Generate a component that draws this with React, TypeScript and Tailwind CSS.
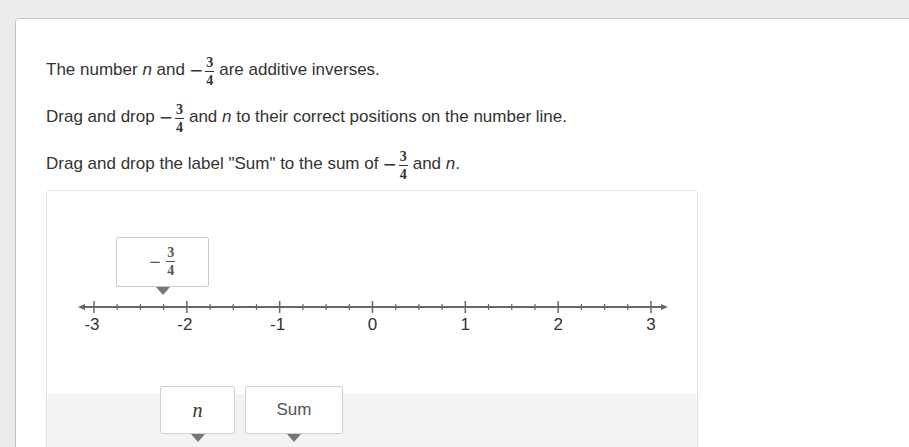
import React from "react";

const Frac = ({ num, den }: { num: string; den: string }) => (
    <span className="inline-flex flex-col items-center align-middle font-['Liberation_Serif',serif] font-bold text-[14px] leading-[12px] mx-[1px]">
        <span className="border-b border-current px-[1px] pb-[2px]">{num}</span>
        <span className="pt-[3px]">{den}</span>
    </span>
);

const NegFrac = () => (
    <span className="inline-flex items-center mx-[4px] mt-[4px]">
        <span className="font-['DejaVu_Sans',sans-serif] text-[17px] mr-[1px] -mt-[3px]">−</span>
        <Frac num="3" den="4" />
    </span>
);

const Pointer = () => (
    <span className="absolute left-1/2 -translate-x-1/2 top-full mt-[1px] w-0 h-0 border-l-[7px] border-r-[7px] border-t-[8px] border-l-transparent border-r-transparent border-t-[#777]" />
);

const UNIT = 92.83;
const X0 = 47;

const NumberLine = () => {
    const y = 116;
    const ticks: React.ReactNode[] = [];
    for (let i = 0; i <= 24; i++) {
        const x = X0 + (UNIT / 4) * i;
        const major = i % 4 === 0;
        ticks.push(
            <line key={i} x1={x} x2={x} y1={y - (major ? 6 : 3)} y2={y + (major ? 6 : 3)} stroke="#666" strokeWidth={major ? 1.5 : 1.2} />
        );
    }
    return (
        <svg width={652} height={150} className="block">
            <line x1={34} x2={618} y1={y} y2={y} stroke="#666" strokeWidth={2} />
            <polygon points={`${31},${y} ${38},${y - 3} ${38},${y + 3}`} fill="#666" />
            <polygon points={`${621},${y} ${614},${y - 3} ${614},${y + 3}`} fill="#666" />
            {ticks}
            {[-3, -2, -1, 0, 1, 2, 3].map((n, i) => (
                <text key={n} x={X0 + UNIT * i - (n < 0 ? 2 : 0)} y={y + 23} textAnchor="middle" fontFamily="'Liberation Sans', Arial, sans-serif" fontSize={17} fill="#333">
                    {n}
                </text>
            ))}
        </svg>
    );
};

export default function App() {
    return (
        <div className="w-[909px] h-[447px] overflow-hidden bg-[#ececec] pt-[18px] pl-[15px] font-['Liberation_Sans',Arial,sans-serif] text-[17px] text-[#333]">
            <div className="w-[920px] h-[460px] bg-white border border-[#c4c4c4] rounded-[4px] pt-[35px] pl-[30px]">
                <div className="h-[32px] flex items-center">
                    The number&nbsp;<i>n</i>&nbsp;and<NegFrac />are additive inverses.
                </div>
                <div className="h-[32px] flex items-center mt-[15px]">
                    Drag and drop<NegFrac />and&nbsp;<i>n</i>&nbsp;to their correct positions on the number line.
                </div>
                <div className="h-[32px] flex items-center mt-[15px]">
                    Drag and drop the label "Sum" to the sum of<NegFrac />and&nbsp;<i>n</i>.
                </div>
                <div className="relative mt-[10px] w-[652px] h-[300px] border border-[#e6e6e6] rounded-[3px] overflow-hidden">
                    <div className="h-[203px] bg-white">
                        <NumberLine />
                    </div>
                    <div className="h-full bg-[#f3f3f3]" />

                    <div className="absolute left-[69px] top-[46px] w-[93px] h-[50px] bg-white border border-[#cccccc] rounded-[2px] flex items-center justify-center text-[#555]">
                        <span className="inline-flex items-center">
                            <span className="font-['DejaVu_Sans',sans-serif] text-[15px] mr-[4px]">−</span>
                            <Frac num="3" den="4" />
                        </span>
                        <Pointer />
                    </div>

                    <div className="absolute left-[113px] top-[195px] w-[75px] h-[48px] bg-white border border-[#d0d0d0] rounded-[2px] flex items-center justify-center">
                        <span className="font-['Liberation_Serif',serif] italic text-[20px] text-[#333]">n</span>
                        <Pointer />
                    </div>

                    <div className="absolute left-[198px] top-[195px] w-[98px] h-[48px] bg-white border border-[#d0d0d0] rounded-[2px] flex items-center justify-center text-[#555]">
                        Sum
                        <Pointer />
                    </div>
                </div>
            </div>
        </div>
    );
}
